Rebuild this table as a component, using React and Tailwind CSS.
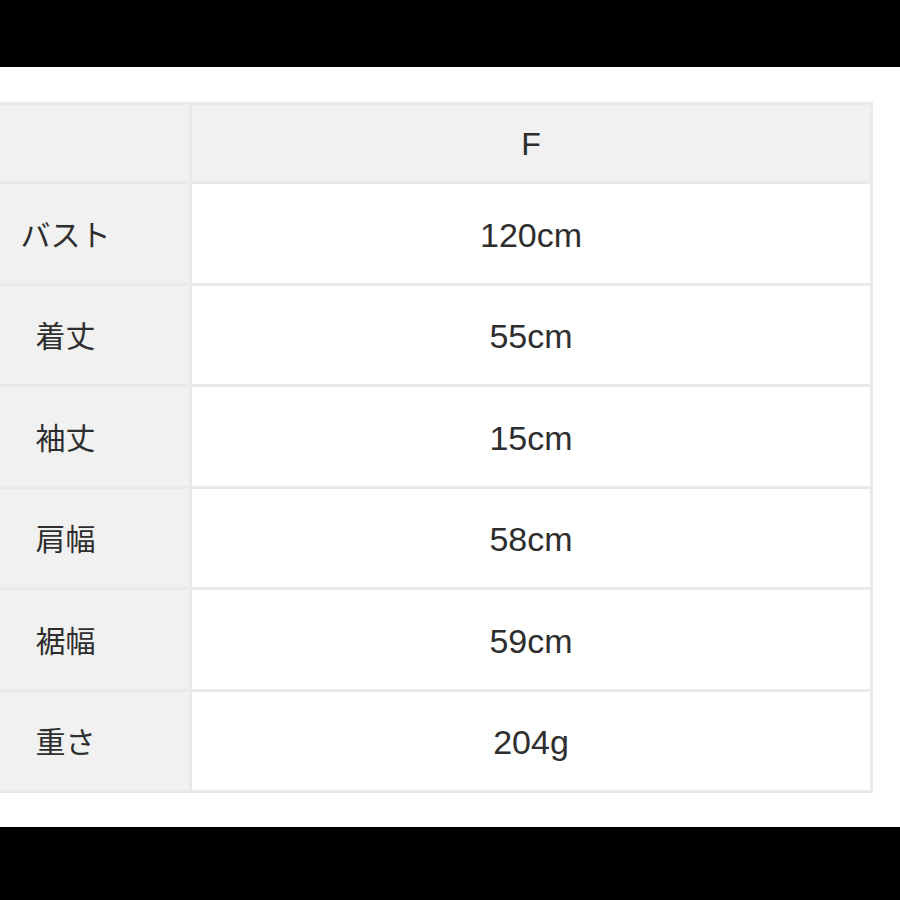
import React from 'react';

const rows = [
    { label: 'バスト', value: '120cm' },
    { label: '着丈', value: '55cm' },
    { label: '袖丈', value: '15cm' },
    { label: '肩幅', value: '58cm' },
    { label: '裾幅', value: '59cm' },
    { label: '重さ', value: '204g' },
];

const font = { fontFamily: '"Liberation Sans", "Noto Sans CJK JP", sans-serif' };

const App = () => {
    return (
        <div className="w-[900px] h-[900px] bg-white flex flex-col text-[#2e2e2e]" style={font}>
            <div className="h-[67px] bg-black" />
            <div className="flex-1 pt-[35px]">
                <div className="w-[873px] border-t-[3px] border-r-[3px] border-[#e9e9e9]">
                    <div className="flex h-[79px] border-b-[3px] border-[#e9e9e9] bg-[#f1f1f1]">
                        <div className="w-[192px] border-r-[3px] border-[#e9e9e9]" />
                        <div className="flex-1 flex items-center justify-center pt-[2px] text-[32px] leading-none">F</div>
                    </div>
                    {rows.map((row) => (
                        <div key={row.label} className="flex h-[101.5px] border-b-[3px] border-[#e9e9e9]">
                            <div className="w-[192px] bg-[#f1f1f1] border-r-[3px] border-[#e9e9e9] flex items-center justify-center pr-[58px] pt-[5px] text-[30px] leading-none">
                                {row.label}
                            </div>
                            <div className="flex-1 flex items-center justify-center pt-[3px] text-[34px] leading-none">
                                {row.value}
                            </div>
                        </div>
                    ))}
                </div>
            </div>
            <div className="h-[73px] bg-black" />
        </div>
    );
};

export default App;
